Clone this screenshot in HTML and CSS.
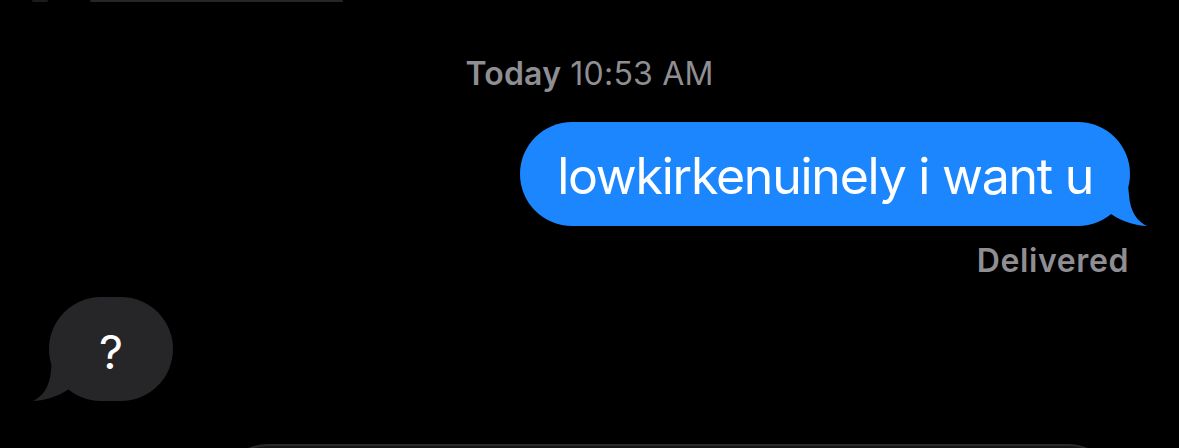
FILE: index.html
```html
<!DOCTYPE html>
<html>
<head>
<meta charset="utf-8">
<link rel="stylesheet" href="styles.css">
</head>
<body>
<div class="screen">
  <div class="top-edge">
    <span class="edge edge-a"></span>
    <span class="edge edge-b"></span>
  </div>
  <div class="timestamp"><span class="day">Today</span> 10:53 AM</div>
  <div class="row row-sent">
    <div class="bubble sent">
      <span class="text">lowkirkenuinely i want u</span>
      <svg class="tail tail-sent" width="40" height="50" viewBox="0 0 40 50"><path d="M20 0 L22 19 C23 36 31 46 40 50 C31 50 15 46 4 38 L4 0 Z" fill="#1b86fd"/></svg>
    </div>
  </div>
  <div class="status">Delivered</div>
  <div class="row row-received">
    <div class="bubble received">
      <span class="text">?</span>
      <svg class="tail tail-received" width="40" height="50" viewBox="0 0 40 50"><path d="M20 0 L18 19 C17 36 9 46 0 50 C9 50 25 46 36 38 L36 0 Z" fill="#262628"/></svg>
    </div>
  </div>
  <div class="composer"></div>
</div>
</body>
</html>
```

FILE: styles.css
```css
html, body {
  margin: 0;
  padding: 0;
  background: #000;
}

.screen {
  width: 1179px;
  height: 448px;
  overflow: hidden;
  display: flex;
  flex-direction: column;
  font-family: Inter, "Noto Sans", "Liberation Sans", sans-serif;
  background: #000;
}

.top-edge {
  height: 2px;
  display: flex;
  gap: 42px;
  padding-left: 32px;
}

.edge {
  height: 2px;
  border-radius: 1px;
  background: #262628;
}

.edge-a {
  width: 16px;
  background: #1a1a1b;
}

.edge-b {
  width: 253px;
}

.timestamp {
  margin-top: 54px;
  height: 36px;
  line-height: 36px;
  text-align: center;
  font-size: 32px;
  letter-spacing: 0.2px;
  color: #8e8e93;
  font-weight: 400;
}

.timestamp .day {
  font-weight: 600;
}

.row {
  display: flex;
}

.row-sent {
  margin-top: 30px;
  justify-content: flex-end;
  padding-right: 49px;
}

.row-received {
  margin-top: 18px;
  padding-left: 49px;
}

.bubble {
  position: relative;
  height: 104px;
  border-radius: 52px;
  display: flex;
  align-items: center;
  justify-content: center;
  color: #fff;
  font-size: 50px;
  line-height: 1;
}

.bubble .text {
  position: relative;
  z-index: 1;
  padding-top: 4px;
}

.sent {
  background: #1b86fd;
  padding: 0 37px;
  letter-spacing: -1.25px;
}

.received {
  background: #262628;
  width: 124px;
  font-size: 47px;
}

.tail {
  position: absolute;
  bottom: 0;
  display: block;
}

.tail-sent {
  right: -17px;
}

.tail-received {
  left: -16px;
}

.status {
  margin-top: 17px;
  height: 36px;
  line-height: 36px;
  text-align: right;
  padding-right: 50px;
  font-size: 32px;
  letter-spacing: 0.6px;
  font-weight: 600;
  color: #8e8e93;
}

.composer {
  margin-top: 43px;
  margin-left: 218px;
  width: 900px;
  height: 100px;
  flex-shrink: 0;
  border-radius: 50px;
  background: #161617;
  border-top: 2px solid #2a2a2c;
}
```
